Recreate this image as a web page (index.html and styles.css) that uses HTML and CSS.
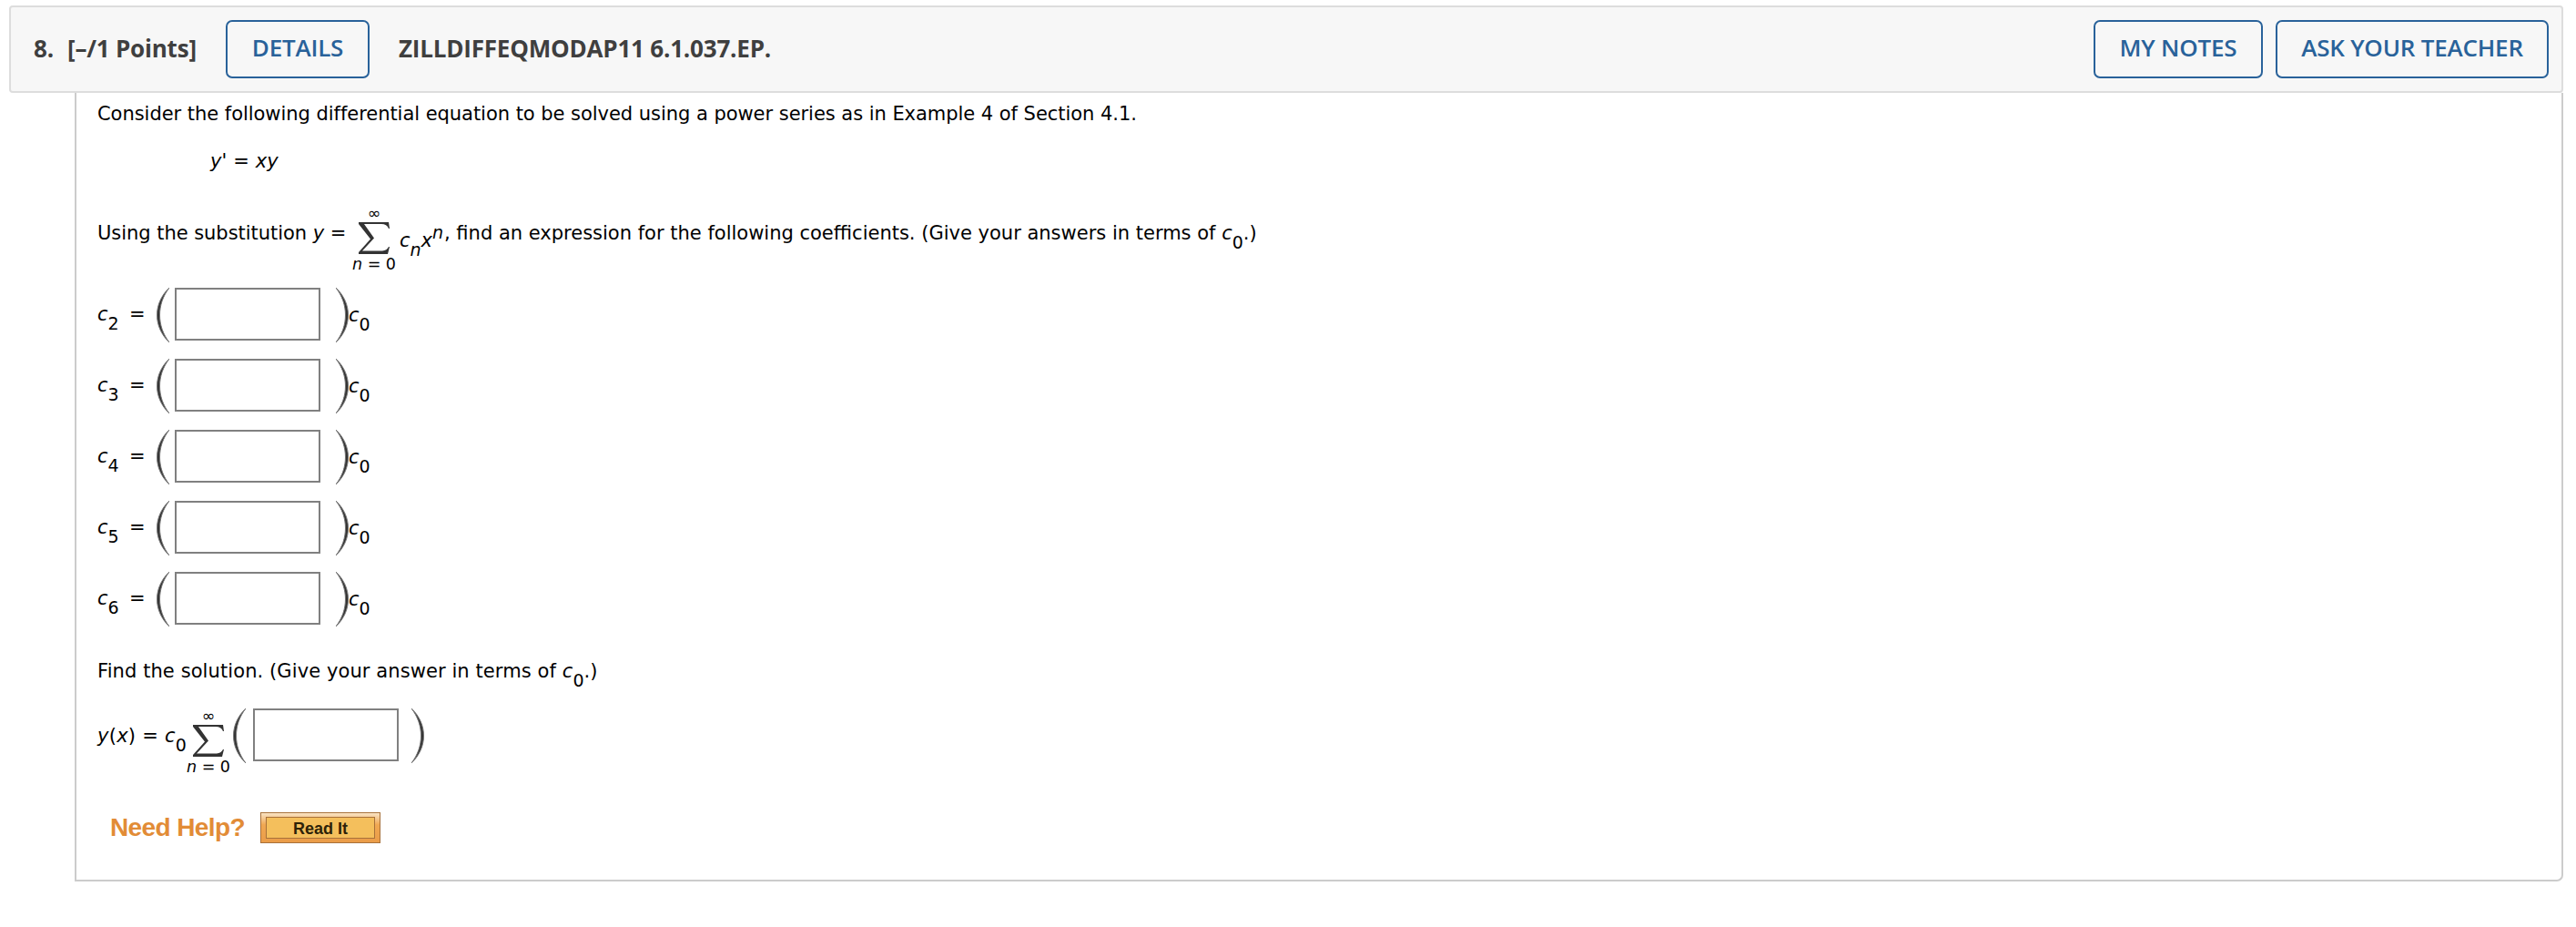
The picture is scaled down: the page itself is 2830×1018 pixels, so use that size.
FILE: index.html
```
<!DOCTYPE html>
<html lang="en">
<head>
  <meta charset="UTF-8">
  <title>ZILLDIFFEQMODAP11 6.1.037.EP.</title>
  <link rel="stylesheet" href="styles.css">
</head>
<body>
  <svg class="defs" aria-hidden="true">
    <symbol id="paren-left" viewBox="0 0 14 60">
      <path d="M14 0C-4 17-4 43 14 60C0 42 0 18 14 0Z" fill="#333" stroke="#777" stroke-width="1"/>
    </symbol>
    <symbol id="paren-right" viewBox="0 0 14 60">
      <path d="M0 0C18 17 18 43 0 60C14 42 14 18 0 0Z" fill="#333" stroke="#777" stroke-width="1"/>
    </symbol>
    <symbol id="sigma" viewBox="0 0 34 36">
      <path d="M0 0H33L34 7H33Q31 2 25 2H6L17 17.500L4 31.500H26Q31 31 33 27H34L32 35H0V33L13 18.500L0 2Z" fill="#333"/>
    </symbol>
  </svg>
  <div class="question">
    <header class="question-header">
      <span class="number">8.</span>
      <span class="points">[–/1 Points]</span>
      <button class="btn btn-details">DETAILS</button>
      <span class="question-name">ZILLDIFFEQMODAP11 6.1.037.EP.</span>
      <div class="actions">
        <button class="btn btn-notes">MY NOTES</button>
        <button class="btn btn-ask">ASK YOUR TEACHER</button>
      </div>
    </header>
    <main class="question-body">
      <p class="intro">Consider the following differential equation to be solved using a power series as in Example 4 of Section 4.1.</p>
      <p class="equation"><i>y'</i> = <i>xy</i></p>
      <div class="substitution">
        <span class="sub-start">Using the substitution <i>y</i> =</span>
        <span class="sum">
          <span class="sum-top">∞</span>
          <svg class="sigma"><use href="#sigma"/></svg>
          <span class="sum-bottom"><i>n</i> = 0</span>
        </span>
        <span class="series"><i>c<sub>n</sub>x<sup>n</sup></i></span>
        <span class="sub-end">, find an expression for the following coefficients. (Give your answers in terms of <i>c</i><sub>0</sub>.)</span>
      </div>
      <div class="answer">
        <span class="coef"><i>c</i><sub>2</sub></span><span class="eq">=</span>
        <svg class="paren"><use href="#paren-left"/></svg>
        <input type="text" class="blank">
        <svg class="paren right"><use href="#paren-right"/></svg>
        <span class="c0"><i>c</i><sub>0</sub></span>
      </div>
      <div class="answer">
        <span class="coef"><i>c</i><sub>3</sub></span><span class="eq">=</span>
        <svg class="paren"><use href="#paren-left"/></svg>
        <input type="text" class="blank">
        <svg class="paren right"><use href="#paren-right"/></svg>
        <span class="c0"><i>c</i><sub>0</sub></span>
      </div>
      <div class="answer">
        <span class="coef"><i>c</i><sub>4</sub></span><span class="eq">=</span>
        <svg class="paren"><use href="#paren-left"/></svg>
        <input type="text" class="blank">
        <svg class="paren right"><use href="#paren-right"/></svg>
        <span class="c0"><i>c</i><sub>0</sub></span>
      </div>
      <div class="answer">
        <span class="coef"><i>c</i><sub>5</sub></span><span class="eq">=</span>
        <svg class="paren"><use href="#paren-left"/></svg>
        <input type="text" class="blank">
        <svg class="paren right"><use href="#paren-right"/></svg>
        <span class="c0"><i>c</i><sub>0</sub></span>
      </div>
      <div class="answer">
        <span class="coef"><i>c</i><sub>6</sub></span><span class="eq">=</span>
        <svg class="paren"><use href="#paren-left"/></svg>
        <input type="text" class="blank">
        <svg class="paren right"><use href="#paren-right"/></svg>
        <span class="c0"><i>c</i><sub>0</sub></span>
      </div>
      <p class="find">Find the solution. (Give your answer in terms of <i>c</i><sub>0</sub>.)</p>
      <div class="solution">
        <span class="yx"><i>y</i>(<i>x</i>) = <i>c</i><sub>0</sub></span>
        <span class="sum">
          <span class="sum-top">∞</span>
          <svg class="sigma"><use href="#sigma"/></svg>
          <span class="sum-bottom"><i>n</i> = 0</span>
        </span>
        <svg class="paren"><use href="#paren-left"/></svg>
        <input type="text" class="blank">
        <svg class="paren right"><use href="#paren-right"/></svg>
      </div>
      <div class="help">
        <span class="help-label">Need Help?</span>
        <button class="read-it"><span>Read It</span></button>
      </div>
    </main>
  </div>
</body>
</html>
```
FILE: styles.css
```
* {
  box-sizing: border-box;
}
body {
  margin: 0;
  background-color: #fff;
  color: #000;
  font-family: Verdana, "DejaVu Sans", sans-serif;
  font-size: 21px;
  line-height: 26px;
  letter-spacing: -0.04px;
}
p {
  margin: 0;
  white-space: nowrap;
}
.defs {
  display: none;
}
.question {
  padding: 6px 14px 0 10px;
}
.question-header {
  display: flex;
  align-items: center;
  height: 96px;
  padding: 0 14px 0 25px;
  background-color: #f7f7f7;
  border: 2px solid #ddd;
  border-radius: 4px;
  color: #3f3f3f;
  font-family: "Open Sans", sans-serif;
  font-size: 26px;
  font-weight: 700;
  letter-spacing: -0.2px;
  white-space: nowrap;
}
.number,
.points,
.question-name {
  padding-bottom: 2px;
}
.number {
  width: 37px;
}
.points {
  width: 174px;
}
.btn {
  height: 64px;
  padding: 0 0 5px;
  background-color: transparent;
  border: 2px solid #29629a;
  border-radius: 7px;
  color: #29629a;
  font-family: "Open Sans", sans-serif;
  font-size: 26px;
  font-weight: 600;
  letter-spacing: -0.2px;
}
.btn-details {
  width: 158px;
}
.question-name {
  margin-left: 32px;
}
.actions {
  display: flex;
  gap: 14px;
  margin-left: auto;
}
.btn-notes {
  width: 186px;
}
.btn-ask {
  width: 300px;
}
.question-body {
  height: 866px;
  margin-left: 72px;
  padding: 10px 0 0 23px;
  border: 2px solid #ccc;
  border-top: 0;
  border-radius: 0 0 7px 0;
}
sub,
sup {
  font-size: 19px;
  line-height: 0;
}
sub {
  vertical-align: -10px;
}
sup {
  vertical-align: 9px;
}
.equation {
  margin: 26px 0 0 124px;
  letter-spacing: 0.1px;
}
.substitution {
  display: flex;
  height: 72px;
  margin-top: 38px;
  white-space: nowrap;
}
.sub-start {
  width: 281px;
  margin-top: 15px;
}
.sum {
  display: flex;
  flex-direction: column;
  align-items: center;
  width: 46px;
  font-size: 17.5px;
}
.sum-top {
  height: 16px;
  line-height: 13px;
}
.sigma {
  width: 34px;
  height: 36px;
}
.sum-bottom {
  line-height: 20px;
  white-space: nowrap;
}
.series {
  width: 49px;
  margin: 23px 0 0 5px;
}
.sub-end {
  margin-top: 15px;
  letter-spacing: 0;
}
.answer {
  display: flex;
  height: 78px;
  padding-top: 10px;
}
.substitution + .answer {
  margin-top: 6px;
}
.coef {
  width: 35px;
  margin-top: 16px;
}
.eq {
  width: 30px;
  margin-top: 16px;
}
.paren {
  flex: none;
  width: 14px;
  height: 60px;
}
.paren.right {
  margin-left: 17px;
}
.blank {
  width: 160px;
  height: 58px;
  margin: 0 0 0 6px;
  background-color: #fff;
  border: 2px solid #808080;
  border-radius: 0;
}
.c0 {
  margin-top: 17px;
}
.find {
  margin-top: 28px;
  letter-spacing: 0.09px;
}
.solution {
  display: flex;
  margin-top: 28px;
}
.solution .sum {
  margin-top: 2px;
}
.yx {
  width: 99px;
  margin-top: 17px;
  letter-spacing: 0.25px;
  white-space: nowrap;
}
.solution .paren {
  margin-left: 4px;
}
.solution .blank {
  margin-left: 8px;
}
.solution .paren.right {
  margin-left: 14px;
}
.help {
  display: flex;
  align-items: center;
  height: 34px;
  margin: 40px 0 0 14px;
  font-family: Arial, "Liberation Sans", sans-serif;
}
.help-label {
  width: 165px;
  color: #e28c36;
  font-size: 28px;
  font-weight: 700;
  letter-spacing: -0.6px;
  white-space: nowrap;
}
.read-it {
  width: 132px;
  height: 34px;
  padding: 4px 5px;
  background: linear-gradient(#f9e3c4, #f0a852 40%, #ea9c48);
  border: 1px solid #a8713a;
  font-family: Arial, "Liberation Sans", sans-serif;
}
.read-it span {
  display: block;
  height: 24px;
  background-color: #f4bf5c;
  border: 1px solid #a8713a;
  color: #2d2208;
  font-size: 18px;
  font-weight: 700;
  line-height: 25px;
}
```
